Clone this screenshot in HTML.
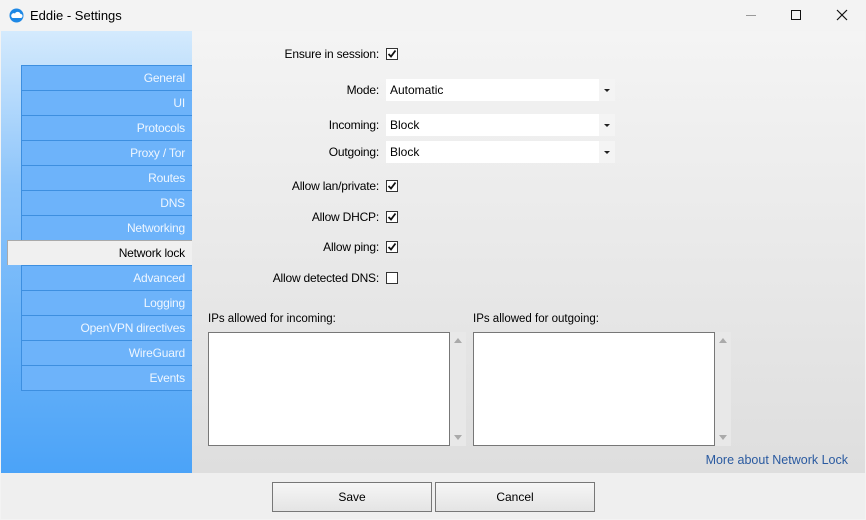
<!DOCTYPE html>
<html><head><meta charset="utf-8"><style>
*{margin:0;padding:0;box-sizing:border-box}
body{width:866px;height:520px;overflow:hidden;background:#f3f3f3;font-family:"Liberation Sans",sans-serif;font-size:12px;color:#000;position:relative}
.a{position:absolute}
#title{left:0;top:0;width:866px;height:31px;background:#f3f3f3}
#side{left:1px;top:31px;width:191px;height:442px;background:linear-gradient(#d4eafd,#8cc4fa 35%,#4ba3f8)}
#content{left:192px;top:31px;width:673px;height:442px;background:linear-gradient(#f4f4f4,#dedede)}
#bottom{left:1px;top:473px;width:864px;height:46px;background:#efefef}
.item{position:absolute;left:21px;width:171px;height:25px;border:1px solid #3d8fe0;border-right:none;border-bottom:none;background:#6db3fa;color:#eef6ff;text-align:right;padding-right:7px;line-height:24px;font-size:12px;letter-spacing:-0.2px}
.sel{left:7px;width:185px;background:#f0f0f0;color:#000;border-color:#aaa}
.lbl{position:absolute;right:487px;text-align:right;white-space:nowrap;letter-spacing:-0.2px}
.cb{position:absolute;left:386px;width:12px;height:12px;border:1px solid #333;background:#fff}
.cb svg{position:absolute;left:0;top:0}
.combo{position:absolute;left:386px;width:229px;height:22px;background:#fff;padding-left:4px;line-height:22px}
.combo:after{content:"";position:absolute;right:5px;top:10px;border:3px solid transparent;border-top:3px solid #222;border-bottom:none}
.combo i{position:absolute;right:0;top:0;width:16px;height:22px;background:#f4f4f4}
.ta{position:absolute;top:332px;height:114px;background:#fff;border:1px solid #777}
.sb{position:absolute;top:332px;width:16px;height:114px;background:#e8e8e8}
.sb:before{content:"";position:absolute;left:4px;top:6px;border:4px solid transparent;border-bottom:5px solid #aaa;border-top:none}
.sb:after{content:"";position:absolute;left:4px;bottom:6px;border:4px solid transparent;border-top:5px solid #aaa;border-bottom:none}
.btn{position:absolute;top:482px;width:160px;height:30px;border:1px solid #777;background:linear-gradient(#f6f6f6,#e4e4e4);text-align:center;line-height:28px}
</style></head><body>
<div id="title" class="a">
<svg class="a" style="left:9px;top:8px" width="15" height="15" viewBox="0 0 15 15"><circle cx="7.5" cy="7.5" r="7" fill="#1e88e5"/><path d="M3.5 10h8a2 2 0 0 0 0-4 3 3 0 0 0-5.5-.5A2.2 2.2 0 0 0 3.5 10z" fill="#fff"/></svg>
<div class="a" style="left:30px;top:8px;font-size:13px">Eddie - Settings</div>
<div class="a" style="left:746px;top:15px;width:10px;height:1px;background:#999"></div>
<div class="a" style="left:791px;top:10px;width:10px;height:10px;border:1px solid #111"></div>
<svg class="a" style="left:836px;top:9px" width="12" height="12"><path d="M1 1L11 11M11 1L1 11" stroke="#111" stroke-width="1.2"/></svg>
</div>
<div id="side" class="a"></div>
<div class="item" style="top:65px">General</div>
<div class="item" style="top:90px">UI</div>
<div class="item" style="top:115px">Protocols</div>
<div class="item" style="top:140px">Proxy / Tor</div>
<div class="item" style="top:165px">Routes</div>
<div class="item" style="top:190px">DNS</div>
<div class="item" style="top:215px">Networking</div>
<div class="item sel" style="top:240px">Network lock</div>
<div class="item" style="top:265px">Advanced</div>
<div class="item" style="top:290px">Logging</div>
<div class="item" style="top:315px">OpenVPN directives</div>
<div class="item" style="top:340px">WireGuard</div>
<div class="item" style="top:365px;height:26px;border-bottom:1px solid #3d8fe0">Events</div>
<div id="content" class="a"></div>

<div class="lbl" style="top:47px">Ensure in session:</div>
<div class="cb" style="top:48px"><svg width="10" height="10"><path d="M1.5 5L4 7.5L8.5 1.5" stroke="#111" stroke-width="1.8" fill="none"/></svg></div>
<div class="lbl" style="top:83px">Mode:</div>
<div class="combo" style="top:79px">Automatic<i></i></div>
<div class="lbl" style="top:118px">Incoming:</div>
<div class="combo" style="top:114px">Block<i></i></div>
<div class="lbl" style="top:145px">Outgoing:</div>
<div class="combo" style="top:141px">Block<i></i></div>
<div class="lbl" style="top:179px">Allow lan/private:</div>
<div class="cb" style="top:180px"><svg width="10" height="10"><path d="M1.5 5L4 7.5L8.5 1.5" stroke="#111" stroke-width="1.8" fill="none"/></svg></div>
<div class="lbl" style="top:210px">Allow DHCP:</div>
<div class="cb" style="top:211px"><svg width="10" height="10"><path d="M1.5 5L4 7.5L8.5 1.5" stroke="#111" stroke-width="1.8" fill="none"/></svg></div>
<div class="lbl" style="top:240px">Allow ping:</div>
<div class="cb" style="top:241px"><svg width="10" height="10"><path d="M1.5 5L4 7.5L8.5 1.5" stroke="#111" stroke-width="1.8" fill="none"/></svg></div>
<div class="lbl" style="top:271px">Allow detected DNS:</div>
<div class="cb" style="top:272px"></div>

<div class="a" style="left:208px;top:313px;font-size:11.5px">IPs allowed for incoming:</div>
<div class="a" style="left:473px;top:313px;font-size:11.5px">IPs allowed for outgoing:</div>
<div class="ta" style="left:208px;width:242px"></div>
<div class="sb" style="left:450px"></div>
<div class="ta" style="left:473px;width:242px"></div>
<div class="sb" style="left:715px"></div>
<div class="a" style="right:18px;top:453px;color:#2a5aa0;font-size:12.5px">More about Network Lock</div>

<div id="bottom" class="a"></div>
<div class="btn" style="left:272px">Save</div>
<div class="btn" style="left:435px">Cancel</div>
</body></html>
